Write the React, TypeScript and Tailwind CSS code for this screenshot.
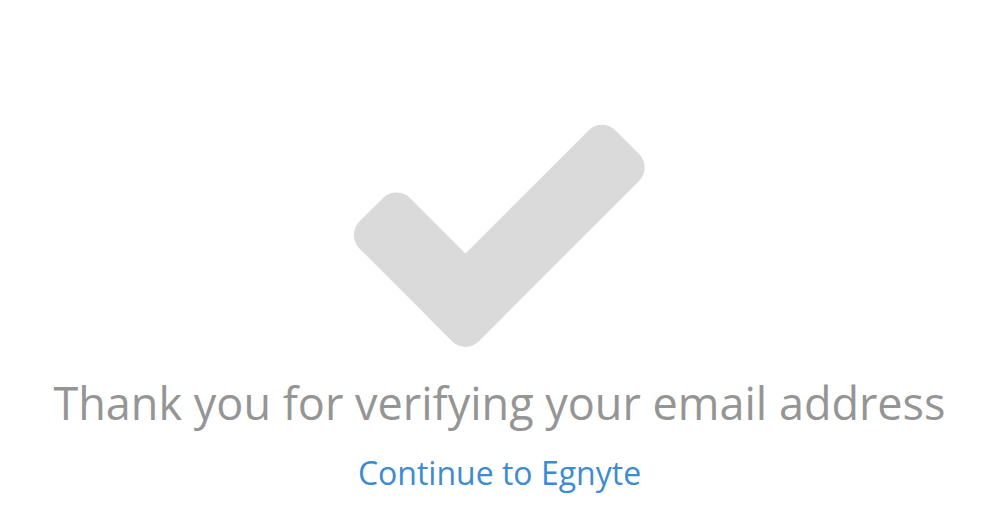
import React from 'react';

function CheckMark() {
  return (
    <svg width="307" height="238" viewBox="0 0 307 238" className="block">
      <g fill="#dadada" transform="translate(119.5 237.5) rotate(-45)">
        <rect x="0" y="-71.4" width="264.5" height="71.4" rx="19" />
        <rect x="0" y="-169" width="71.4" height="169" rx="19" />
      </g>
    </svg>
  );
}

export default function App() {
  return (
    <div
      className="min-h-[523px] w-full bg-white flex flex-col items-center pt-[117px]"
      style={{ fontFamily: '"Open Sans", "Noto Sans", sans-serif' }}
    >
      <CheckMark />
      <h1 className="mt-[21px] text-[45px] leading-[54px] text-[#959595] font-normal whitespace-nowrap">
        Thank you for verifying your email address
      </h1>
      <a href="#" className="mt-[24px] text-[32px] leading-[38px] text-[#3d8bd1] no-underline">
        Continue to Egnyte
      </a>
    </div>
  );
}
